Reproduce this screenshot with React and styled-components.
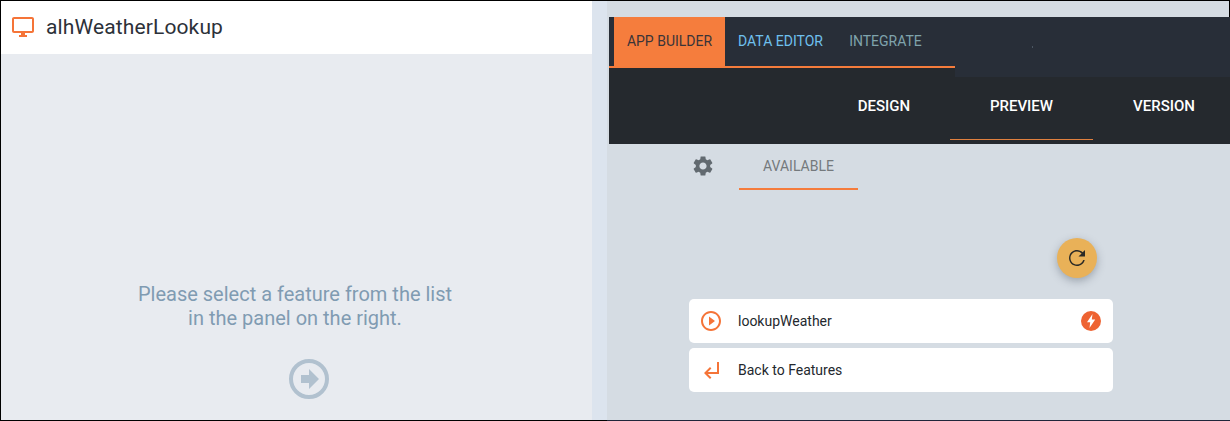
import React from "react";
import styled, { createGlobalStyle } from "styled-components";

const Global = createGlobalStyle`
  * { box-sizing: border-box; }
  body { margin: 0; font-family: Roboto, "Liberation Sans", sans-serif; }
`;

const Frame = styled.div`
  display: flex;
  width: 1230px;
  height: 421px;
  overflow: hidden;
  border-top: 1px solid #000;
  border-left: 1px solid #000;
  background: #d5dce3;
`;
const PreviewPane = styled.section`
  display: flex;
  flex-direction: column;
  width: 591px;
  background: #e8ebf0;
  border-bottom: 1px solid #000;
`;
const PreviewHeader = styled.header`
  display: flex;
  align-items: center;
  height: 53px;
  padding: 0 10px 1px;
  gap: 11px;
  background: #fff;
`;
const Title = styled.h1`
  margin: 0;
  font-size: 21px;
  font-weight: 400;
  line-height: 24px;
  letter-spacing: 0.13px;
  color: #2c3139;
`;
const EmptyState = styled.div`
  display: flex;
  flex-direction: column;
  align-items: center;
  padding: 228px 0 0 24px;
  gap: 25px;
`;
const Hint = styled.p`
  width: 330px;
  margin: 0 27px 0 0;
  font-size: 20px;
  line-height: 24px;
  text-align: center;
  color: #809bb2;
`;
const Splitter = styled.div`
  width: 15px;
  background: #dce4ee;
  border-bottom: 1px solid #000;
`;
const BuilderPane = styled.section`
  width: 623px;
  border-bottom: 1px solid #20263a;
`;
const TopStrip = styled.div`
  height: 16px;
  border-right: 1px solid #000;
`;
const BuilderBody = styled.div`
  padding-left: 2px;
`;
const Nav = styled.nav`
  height: 127px;
  background: #25292e;
`;
const MainNav = styled.div`
  display: flex;
  height: 60px;
`;
const MainTabs = styled.div`
  display: flex;
  width: 346px;
  height: 51px;
  padding-left: 5px;
  background: #282e38;
  border-bottom: 2px solid #f57c3c;
`;
const MainNavRest = styled.div`
  flex: 1;
  padding: 29px 0 0 77px;
  background: #282e38;
`;
const Tick = styled.div`
  width: 1px;
  height: 2px;
  background: #4b5662;
`;
const MainTab = styled.div`
  width: ${(p) => p.$width}px;
  height: 49px;
  text-align: center;
  font-size: 14px;
  line-height: 49px;
  white-space: nowrap;
  color: ${(p) => p.$color};
  background: ${(p) => (p.$active ? "#f57d3d" : "transparent")};
`;
const SubNav = styled.div`
  display: flex;
  height: 63px;
  padding-left: 209px;
`;
const SubTab = styled.div`
  flex: none;
  width: ${(p) => p.$width}px;
  height: 63px;
  padding-top: 17px;
  text-align: center;
  font-size: 15px;
  line-height: 24px;
  font-weight: 500;
  color: #fff;
  border-bottom: 1px solid ${(p) => (p.$active ? "#e0803f" : "transparent")};
`;
const FilterBar = styled.div`
  display: flex;
  align-items: flex-start;
  padding: 0 0 0 82px;
  gap: 24px;
`;
const FilterIcon = styled.div`
  height: 24px;
  margin-top: 10px;
`;
const FilterTab = styled.div`
  width: 119px;
  height: 46px;
  text-align: center;
  font-size: 14px;
  line-height: 45px;
  color: #74797c;
  border-bottom: 2px solid #f57c3c;
`;
const Actions = styled.div`
  display: flex;
  justify-content: flex-end;
  width: 488px;
  padding: 48px 0 21px;
`;
const RoundButton = styled.button`
  display: flex;
  align-items: center;
  justify-content: center;
  width: 40px;
  height: 40px;
  padding: 0;
  border: 0;
  border-radius: 50%;
  background: #e9b158;
  box-shadow: 0 3px 9px rgba(50, 60, 75, 0.35);
`;
const FeatureList = styled.div`
  display: flex;
  flex-direction: column;
  width: 424px;
  margin-left: 80px;
  gap: 5px;
`;
const Feature = styled.div`
  display: flex;
  align-items: center;
  height: 44px;
  padding: 0 10px;
  gap: 15px;
  border-radius: 5px;
  background: #fff;
`;
const FeatureName = styled.span`
  flex: 1;
  font-size: 14px;
  color: #24282e;
`;
const Svg = styled.svg`
  display: block;
  flex: none;
`;

const Icon = ({ d, size = 24, color = "#f57438", children }) => (
  <Svg width={size} height={size} viewBox="0 0 24 24" fill={color}>
    {d && <path d={d} />}
    {children}
  </Svg>
);

const MONITOR =
  "M21 2H3c-1.1 0-2 .9-2 2v12c0 1.1.9 2 2 2h7v2H8v2h8v-2h-2v-2h7c1.1 0 2-.9 2-2V4c0-1.1-.9-2-2-2zm0 14H3V4h18v12z";
const GEAR =
  "M19.14 12.94c.04-.3.06-.61.06-.94 0-.32-.02-.64-.07-.94l2.03-1.58c.18-.14.23-.41.12-.61l-1.92-3.32c-.12-.22-.37-.29-.59-.22l-2.39.96c-.5-.38-1.03-.7-1.62-.94l-.36-2.54c-.04-.24-.24-.41-.48-.41h-3.84c-.24 0-.43.17-.47.41l-.36 2.54c-.59.24-1.13.57-1.62.94l-2.39-.96c-.22-.08-.47 0-.59.22L2.74 8.87c-.12.21-.08.47.12.61l2.03 1.58c-.05.3-.09.63-.09.94s.02.64.07.94l-2.03 1.58c-.18.14-.23.41-.12.61l1.92 3.32c.12.22.37.29.59.22l2.39-.96c.5.38 1.03.7 1.62.94l.36 2.54c.05.24.24.41.48.41h3.84c.24 0 .44-.17.47-.41l.36-2.54c.59-.24 1.13-.56 1.62-.94l2.39.96c.22.08.47 0 .59-.22l1.92-3.32c.12-.22.07-.47-.12-.61l-2.01-1.58zM12 15.6c-1.98 0-3.6-1.62-3.6-3.6s1.62-3.6 3.6-3.6 3.6 1.62 3.6 3.6-1.62 3.6-3.6 3.6z";
const REFRESH =
  "M17.65 6.35C16.2 4.9 14.21 4 12 4c-4.42 0-7.99 3.58-7.99 8s3.57 8 7.99 8c3.73 0 6.84-2.55 7.73-6h-1.5c-.85 2.65-3.3 4.55-6.23 4.55-3.62 0-6.55-2.93-6.55-6.55s2.93-6.55 6.55-6.55c1.82 0 3.42.75 4.6 1.93L13.5 10.5H20V4l-2.35 2.35z";
const PLAY =
  "M10 16.5l6-4.5-6-4.5v9zM12 2C6.48 2 2 6.48 2 12s4.48 10 10 10 10-4.48 10-10S17.52 2 12 2zm0 18c-4.41 0-8-3.59-8-8s3.59-8 8-8 8 3.59 8 8-3.59 8-8 8z";
const RETURN =
  "M11 9l1.42 1.42L8.83 14H18V4h2v12H8.83l3.59 3.58L11 21l-6-6 6-6z";

export default function App() {
  return (
    <>
      <Global />
      <Frame>
        <PreviewPane>
          <PreviewHeader>
            <Icon d={MONITOR} />
            <Title>alhWeatherLookup</Title>
          </PreviewHeader>
          <EmptyState>
            <Hint>
              Please select a feature from the list
              <br />
              in the panel on the right.
            </Hint>
            <Icon size={48} color="#b1c1cf">
              <circle cx="12" cy="12" r="9" fill="none" stroke="#b1c1cf" strokeWidth="2" />
              <path d="M17 12l-5 5v-3H8v-4h4V7z" />
            </Icon>
          </EmptyState>
        </PreviewPane>
        <Splitter />
        <BuilderPane>
          <TopStrip />
          <BuilderBody>
            <Nav>
              <MainNav>
                <MainTabs>
                  <MainTab $active $width={111} $color="#3a3438">APP BUILDER</MainTab>
                  <MainTab $width={111} $color="#6fc0ee">DATA EDITOR</MainTab>
                  <MainTab $width={99} $color="#7fa3ac">INTEGRATE</MainTab>
                </MainTabs>
                <MainNavRest>
                  <Tick />
                </MainNavRest>
              </MainNav>
              <SubNav>
                <SubTab $width={132}>DESIGN</SubTab>
                <SubTab $width={143} $active>PREVIEW</SubTab>
                <SubTab $width={142}>VERSION</SubTab>
              </SubNav>
            </Nav>
            <FilterBar>
              <FilterIcon>
                <Icon d={GEAR} color="#626a70" />
              </FilterIcon>
              <FilterTab>AVAILABLE</FilterTab>
            </FilterBar>
            <Actions>
              <RoundButton aria-label="Refresh">
                <Icon d={REFRESH} color="#2b2a26" />
              </RoundButton>
            </Actions>
            <FeatureList>
              <Feature>
                <Icon d={PLAY} />
                <FeatureName>lookupWeather</FeatureName>
                <Icon>
                  <circle cx="12" cy="12" r="10" fill="#ee6332" />
                  <path d="M13.5 5L8 13.2h3.2L10.5 19l5.7-8.4h-3.4z" fill="#fff" />
                </Icon>
              </Feature>
              <Feature>
                <Icon d={RETURN} />
                <FeatureName>Back to Features</FeatureName>
              </Feature>
            </FeatureList>
          </BuilderBody>
        </BuilderPane>
      </Frame>
    </>
  );
}
